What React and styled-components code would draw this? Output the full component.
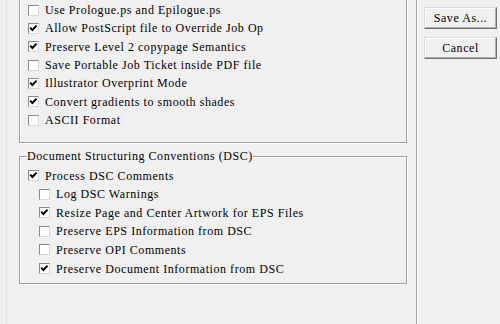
import styled, { createGlobalStyle } from "styled-components"

const GlobalStyle = createGlobalStyle`
html, body {
    margin:0;
    background:#f0f0f0;
}
body {
    font-family:"Liberation Serif", "Times New Roman", serif;
    font-size:12px;
    letter-spacing:0.55px;
    color:#000;
}
`

const topOptions = [
    { label: "Use Prologue.ps and Epilogue.ps", checked: false },
    { label: "Allow PostScript file to Override Job Op", checked: true },
    { label: "Preserve Level 2 copypage Semantics", checked: true },
    { label: "Save Portable Job Ticket inside PDF file", checked: false },
    { label: "Illustrator Overprint Mode", checked: true },
    { label: "Convert gradients to smooth shades", checked: true },
    { label: "ASCII Format", checked: false },
]

const dscOptions = [
    { label: "Process DSC Comments", checked: true, level: 0 },
    { label: "Log DSC Warnings", checked: false, level: 1 },
    { label: "Resize Page and Center Artwork for EPS Files", checked: true, level: 1 },
    { label: "Preserve EPS Information from DSC", checked: false, level: 1 },
    { label: "Preserve OPI Comments", checked: false, level: 1 },
    { label: "Preserve Document Information from DSC", checked: true, level: 1 },
]

const Check = ({ checked }) => (
    <Box>
        {checked && (
            <svg width="9" height="9" viewBox="0 0 9 9">
                <path d="M1.2 3.6 L3.4 6 L7.6 1.6" fill="none" stroke="#000" strokeWidth="2" />
            </svg>
        )}
    </Box>
)

const App = () => {
    return (
        <Window>
            <GlobalStyle />
            <LeftPane>
                <TopGroup>
                    {topOptions.map((o) => (
                        <Row key={o.label} $h={18.33}>
                            <Check checked={o.checked} />
                            <Label>{o.label}</Label>
                        </Row>
                    ))}
                </TopGroup>
                <Group>
                    <Legend>Document Structuring Conventions (DSC)</Legend>
                    {dscOptions.map((o) => (
                        <Row key={o.label} $h={18.6} $indent={o.level * 11}>
                            <Check checked={o.checked} />
                            <Label>{o.label}</Label>
                        </Row>
                    ))}
                </Group>
            </LeftPane>
            <Separator />
            <RightPane>
                <Button>Save As...</Button>
                <Button>Cancel</Button>
            </RightPane>
        </Window>
    )
}

const Window = styled.div`
width:500px;
height:324px;
display:flex;
overflow:hidden;
background:#f0f0f0;
`
const LeftPane = styled.div`
margin-left:6px;
border-left:1px solid #e6dede;
padding:0 9px 0 12px;
box-sizing:border-box;
width:410px;
display:flex;
flex-direction:column;
`
const TopGroup = styled.div`
width:388px;
box-sizing:border-box;
border:1px solid #a0a0a0;
border-top:none;
box-shadow:1px 1px 0 #fff, inset 1px 0 0 #fff;
padding:1px 0 13px 8px;
`
const Group = styled.fieldset`
width:388px;
box-sizing:border-box;
margin:6px 0 0 0;
border:1px solid #a0a0a0;
box-shadow:1px 1px 0 #fff, inset 1px 1px 0 #fff;
padding:3px 0 5px 8px;
min-width:0;
`
const Legend = styled.legend`
padding:0;
margin-left:-1px;
line-height:14px;
height:14px;
`
const Row = styled.div`
height:${(p) => p.$h}px;
display:flex;
align-items:center;
gap:6px;
padding-left:${(p) => p.$indent || 0}px;
white-space:nowrap;
`
const Label = styled.span`
line-height:12px;
`
const Box = styled.span`
width:11px;
height:11px;
box-sizing:border-box;
flex:none;
background:#fff;
border:1px solid;
border-color:#8a8a8a #d8d8d8 #d8d8d8 #8a8a8a;
display:flex;
align-items:center;
justify-content:center;
`
const Separator = styled.div`
width:2px;
flex:none;
border-left:1px solid #a0a0a0;
border-right:1px solid #fff;
box-sizing:border-box;
`
const RightPane = styled.div`
display:flex;
flex-direction:column;
gap:8px;
padding:7px 0 0 6px;
`
const Button = styled.button`
width:73px;
height:22px;
padding:0;
background:#f0f0f0;
font:inherit;
letter-spacing:inherit;
color:#000;
border:1px solid;
border-color:#dcdcdc #707070 #707070 #dcdcdc;
box-shadow:inset -1px -1px 0 #b0b0b0, inset 1px 1px 0 #fff;
`
export default App
